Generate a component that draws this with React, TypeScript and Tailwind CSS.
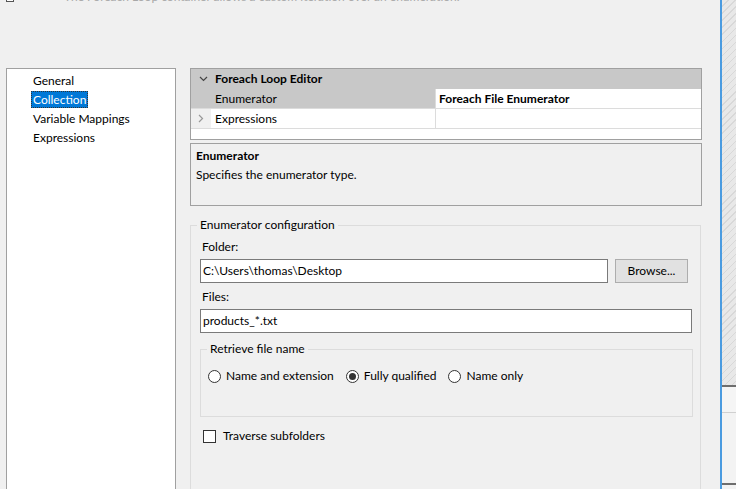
import React from "react";

const font = { fontFamily: 'Lato, "Noto Sans", sans-serif' };

const pages = ["General", "Collection", "Variable Mappings", "Expressions"];

const Radio = ({ label, checked = false }: { label: string; checked?: boolean }) => (
  <label className="flex items-center gap-[5px]">
    <span className="flex h-[13px] w-[13px] items-center justify-center rounded-full border border-[#333333] bg-white">
      {checked && <span className="h-[7px] w-[7px] rounded-full bg-[#333333]" />}
    </span>
    <span>{label}</span>
  </label>
);

const App = () => {
  return (
    <div
      className="relative flex h-[489px] w-[736px] overflow-hidden bg-[#f0f0f0] text-[12px] text-black"
      style={font}
    >
      <div className="flex w-[720px] flex-col">
        {/* cut-off dialog caption */}
        <div className="relative h-[68px] shrink-0">
          <div className="absolute left-[6px] top-[-3px] h-[5px] w-[8px] border border-[#555555] bg-white" />
          <div className="absolute left-[64px] top-[-10px] whitespace-nowrap text-[12px] leading-[14px] text-[#a8a8a8]">
            The Foreach Loop container allows a custom iteration over an enumeration.
          </div>
        </div>

        <div className="flex gap-[14px] pl-[6px]">
          {/* page list */}
          <div className="h-[430px] w-[170px] shrink-0 border border-[#a0a0a0] bg-white pt-[2px]">
            {pages.map((p) => (
              <div key={p} className="flex h-[19px] items-center pl-[24px]">
                <span
                  className={
                    p === "Collection"
                      ? "border border-dotted border-[#333] bg-[#0078d7] px-[1px] leading-[15px] text-white"
                      : "border border-transparent px-[1px] leading-[15px]"
                  }
                >
                  {p}
                </span>
              </div>
            ))}
          </div>

          {/* right panel */}
          <div className="flex w-[512px] shrink-0 flex-col">
            {/* property grid */}
            <div className="h-[72px] border border-[#a0a0a0] bg-white">
              <div className="flex h-[20px] items-center bg-[#c8c8c8] font-bold">
                <span className="flex w-[24px] justify-center">
                  <svg width="9" height="6" viewBox="0 0 9 6">
                    <path d="M1 1l3.5 3.5L8 1" fill="none" stroke="#444" strokeWidth="1.2" />
                  </svg>
                </span>
                Foreach Loop Editor
              </div>
              <div className="flex h-[20px] border-b border-[#dcdcdc]">
                <div className="flex w-[244px] items-center bg-[#c8c8c8] pl-[24px]">Enumerator</div>
                <div className="flex flex-1 items-center border-l border-[#dcdcdc] pl-[3px] font-bold">
                  Foreach File Enumerator
                </div>
              </div>
              <div className="flex h-[20px] border-b border-[#dcdcdc]">
                <div className="flex w-[20px] items-center justify-center bg-[#f0f0f0]">
                  <svg width="6" height="9" viewBox="0 0 6 9">
                    <path d="M1 1l3.5 3.5L1 8" fill="none" stroke="#999" strokeWidth="1.2" />
                  </svg>
                </div>
                <div className="flex w-[224px] items-center pl-[4px]">Expressions</div>
                <div className="flex-1 border-l border-[#dcdcdc]" />
              </div>
            </div>

            {/* description */}
            <div className="mt-[3px] h-[63px] border border-[#a0a0a0] px-[5px] pt-[2px]">
              <div className="font-bold leading-[19px]">Enumerator</div>
              <div className="leading-[19px]">Specifies the enumerator type.</div>
            </div>

            {/* enumerator configuration */}
            <div className="relative mt-[19px] h-[300px] w-[511px] border border-[#dcdcdc] px-[9px] pt-[12px]">
              <span className="absolute left-[6px] top-[-10px] bg-[#f0f0f0] px-[3px] leading-[18px]">
                Enumerator configuration
              </span>
              <div className="pl-[2px] leading-[18px]">Folder:</div>
              <div className="mt-[3px] flex gap-[7px]">
                <div className="flex h-[24px] w-[408px] items-center border border-[#7a7a7a] bg-white pl-[2px]">
                  C:\Users\thomas\Desktop
                </div>
                <div className="flex h-[24px] w-[73px] items-center justify-center border border-[#adadad] bg-[#e1e1e1]">
                  Browse...
                </div>
              </div>
              <div className="mt-[5px] pl-[2px] leading-[18px]">Files:</div>
              <div className="mt-[3px] flex h-[24px] w-[492px] items-center border border-[#7a7a7a] bg-white pl-[2px]">
                products_*.txt
              </div>

              <div className="relative mt-[16px] h-[68px] w-[493px] border border-[#dcdcdc] px-[7px] pt-[17px]">
                <span className="absolute left-[6px] top-[-10px] bg-[#f0f0f0] px-[3px] leading-[18px]">
                  Retrieve file name
                </span>
                <div className="flex gap-[12px]">
                  <Radio label="Name and extension" />
                  <Radio label="Fully qualified" checked />
                  <Radio label="Name only" />
                </div>
              </div>

              <label className="mt-[10px] flex items-center gap-[7px] pl-[3px]">
                <span className="h-[13px] w-[13px] border border-[#333333] bg-white" />
                <span>Traverse subfolders</span>
              </label>
            </div>
          </div>
        </div>
      </div>

      {/* window behind */}
      <div className="flex w-[16px] flex-col border-l-2 border-[#4a9be0]">
        <div
          className="h-[385px] shrink-0 bg-[#e4e4e4]"
          style={{
            backgroundImage:
              "repeating-linear-gradient(135deg, #e8e8e8 0px, #e8e8e8 4px, #d8d8d8 4px, #d8d8d8 5px)",
          }}
        />
        <div className="h-[2px] shrink-0 bg-[#6e6e6e]" />
        <div className="h-[26px] shrink-0 border-b border-[#d0d0d0] bg-[#f5f5f5]" />
        <div className="h-[70px] shrink-0 bg-[#f3f3f3]" />
        <div className="h-[2px] shrink-0 bg-[#6e6e6e]" />
        <div className="flex-1 bg-[#f3f3f3]" />
      </div>
    </div>
  );
};

export default App;
